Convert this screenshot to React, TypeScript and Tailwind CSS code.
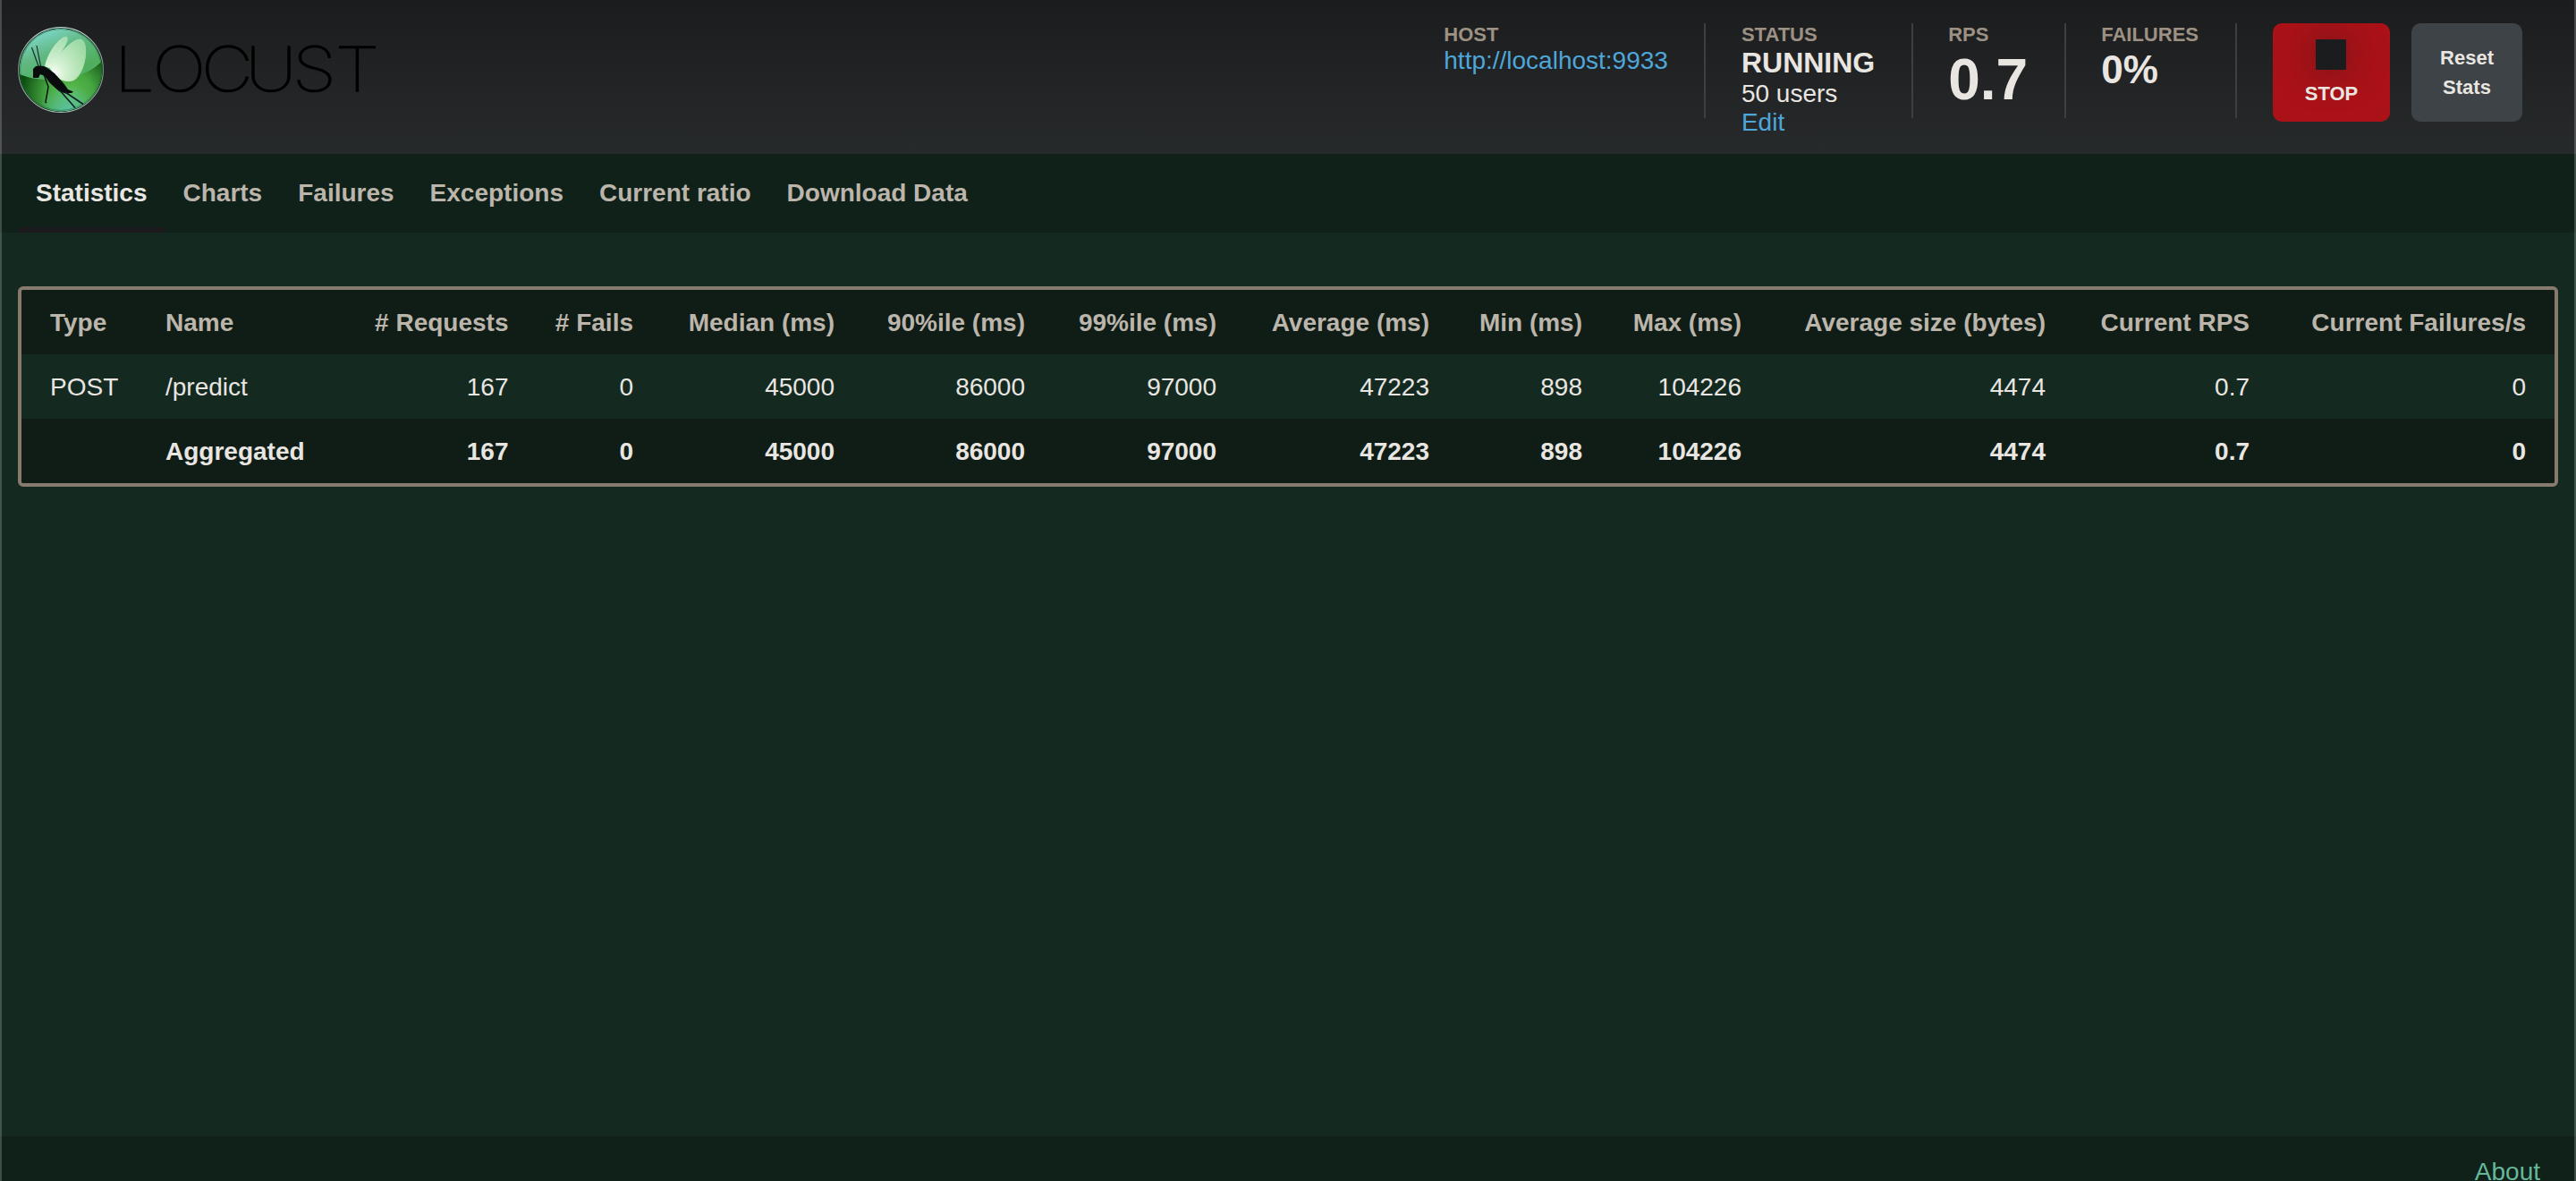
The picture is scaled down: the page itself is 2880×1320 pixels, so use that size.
const headers = [
  'Type', 'Name', '# Requests', '# Fails', 'Median (ms)', '90%ile (ms)', '99%ile (ms)',
  'Average (ms)', 'Min (ms)', 'Max (ms)', 'Average size (bytes)', 'Current RPS', 'Current Failures/s',
];
const widths = [129, 207, 240.5, 139.5, 225, 213, 214, 238, 171, 178, 340, 228, 309];
const values = ['167', '0', '45000', '86000', '97000', '47223', '898', '104226', '4474', '0.7', '0'];
const tabs = ['Statistics', 'Charts', 'Failures', 'Exceptions', 'Current ratio', 'Download Data'];

function LocustMark() {
  return (
    <svg width="120" height="120" viewBox="0 0 120 120" className="block">
      <defs>
        <linearGradient id="ball" x1="0.2" y1="0" x2="0.6" y2="1">
          <stop offset="0" stopColor="#83dcd8" />
          <stop offset="0.3" stopColor="#62b985" />
          <stop offset="0.6" stopColor="#4fae5c" />
          <stop offset="1" stopColor="#55b998" />
        </linearGradient>
        <radialGradient id="shade" gradientUnits="userSpaceOnUse" cx="68" cy="86" r="58">
          <stop offset="0" stopColor="#5fbf50" />
          <stop offset="0.45" stopColor="#45a53c" stopOpacity="0.9" />
          <stop offset="0.95" stopColor="#0a4a0e" />
        </radialGradient>
        <radialGradient id="teal" gradientUnits="userSpaceOnUse" cx="66" cy="108" r="34">
          <stop offset="0" stopColor="#5cc4ae" />
          <stop offset="1" stopColor="#5cc4ae" stopOpacity="0" />
        </radialGradient>
        <radialGradient id="glow" gradientUnits="userSpaceOnUse" cx="50" cy="62" r="46">
          <stop offset="0" stopColor="#fff" />
          <stop offset="0.25" stopColor="#e2f8de" stopOpacity="0.92" />
          <stop offset="1" stopColor="#b4e6b4" stopOpacity="0.72" />
        </radialGradient>
        <linearGradient id="rim" x1="0" y1="0" x2="0" y2="1">
          <stop offset="0" stopColor="#c4d6d3" />
          <stop offset="0.5" stopColor="#7d918b" />
          <stop offset="1" stopColor="#a9bdb6" />
        </linearGradient>
        <clipPath id="disc"><circle cx="58" cy="58" r="46.3" /></clipPath>
      </defs>
      <circle cx="58" cy="58" r="47.4" fill="#0b2a18" stroke="url(#rim)" strokeWidth="1.1" />
      <g clipPath="url(#disc)">
        <circle cx="58" cy="58" r="46.3" fill="url(#ball)" />
        <path d="M10 62 C34 74 84 72 106 46 L110 110 H8 Z" fill="url(#shade)" />
        <circle cx="66" cy="108" r="34" fill="url(#teal)" />
      </g>
      <circle cx="58" cy="58" r="45.4" fill="none" stroke="#17643a" strokeOpacity="0.5" strokeWidth="1" />
      <path d="M40 54 C42 44 50 28 60 22 C65 19 67 22 65 27 C61 37 52 46 45 56 Z" fill="url(#glow)" />
      <path d="M45 55 C54 43 66 28 76 24 C84 21 87 30 86 41 C85 55 78 71 68 71 C59 72 51 66 45 55 Z" fill="url(#glow)" />
      <path d="M27 57 L30 54 C34 53 39 53 43 56 L51 62 L61 73 L66 80 L72 82.500 L70 84 L66 84 L68 86 L56 82 L46 73 L40 65 L35 63 L33 67 L27 67 Z" fill="#0a0b0c" />
      <path d="M25.500 33 L33 54 M31 31 L35.500 54" stroke="#16302d" strokeWidth="1.2" fill="none" />
      <path d="M39 63 L44 77 L41 94 L42 95" stroke="#0b1110" strokeWidth="1.5" fill="none" />
      <path d="M56 80 L74 100.500 M63 83 L83 96.500" stroke="#0d1f2c" strokeWidth="1.6" fill="none" />
    </svg>
  );
}

function Logo() {
  return (
    <div className="flex pt-5">
      <LocustMark />
      <svg width="300" height="120" className="block overflow-visible" aria-label="LOCUST">
        <text
          x="-1.85 34.9 81.9 124.4 169.8 211.1"
          y="82.5"
          transform="scale(1.16 1)"
          className="fill-black stroke-black stroke-[1.4px] font-['Inter'] text-[69px] font-thin"
        >
          LOCUST
        </text>
      </svg>
    </div>
  );
}

function Label({ children }: { children: string }) {
  return <div className="text-[22px] font-bold leading-[26px] text-[#9c9183]">{children}</div>;
}

export default function App() {
  return (
    <div className="relative flex h-[1320px] w-full flex-col overflow-hidden bg-[#142a21] font-['Liberation_Sans',Arial,sans-serif] text-[28px] text-[#e9e6e2]">
      <header className="flex h-[172px] shrink-0 items-start justify-between bg-linear-to-b from-[#1b1c1e] to-[#272a2b] pl-2.5 pr-[60px]">
        <Logo />
        <div className="flex pt-[26px]">
          <div className="h-[106px] border-r-2 border-[#3c4042] pr-10">
            <Label>HOST</Label>
            <a className="block leading-8 text-[#4fa6d8]">http://localhost:9933</a>
          </div>
          <div className="h-[106px] border-r-2 border-[#3c4042] pl-10 pr-[41px]">
            <Label>STATUS</Label>
            <div className="text-[32px] font-bold leading-9">RUNNING</div>
            <div className="mt-px leading-8">50 users</div>
            <a className="block leading-8 text-[#4fa6d8]">Edit</a>
          </div>
          <div className="h-[106px] border-r-2 border-[#3c4042] pl-[39px] pr-[41px]">
            <Label>RPS</Label>
            <div className="mt-[5px] text-[64px] font-bold leading-[64px]">0.7</div>
          </div>
          <div className="h-[106px] border-r-2 border-[#3c4042] pl-[39px] pr-[41px]">
            <Label>FAILURES</Label>
            <div className="mt-0.5 text-[44px] font-bold leading-[48px]">0%</div>
          </div>
          <button className="ml-10 flex h-[110px] w-[131px] flex-col items-center overflow-hidden rounded-[10px] bg-[#ab1217] pt-[18px] text-[22px] font-bold">
            <span className="mr-px block size-[34px] shrink-0 bg-[#1b1c1e] shadow-[0_0_40px_rgba(27,28,30,0.5)]" />
            <span className="relative mt-[15px] block leading-6">STOP</span>
          </button>
          <button className="ml-6 flex h-[110px] w-[124px] flex-col items-center justify-center rounded-[10px] bg-[#3d4346] text-[22px] font-bold leading-[33px]">
            <span>Reset</span>
            <span>Stats</span>
          </button>
        </div>
      </header>

      <nav className="flex h-[88px] shrink-0 bg-[#0f2119] pl-5 font-bold leading-[88px] text-[#bcb5ab]">
        {tabs.map((t, i) => (
          <a key={t} className={i === 0 ? 'px-5 text-[#e9e6e2] shadow-[inset_0_-6px_0_#1b1b1d]' : 'px-5'}>{t}</a>
        ))}
      </nav>

      <main className="flex-1 px-5 pt-[60px]">
        <div className="overflow-hidden rounded-[6px] border-4 border-[#877b6d]">
          <table className="w-full table-fixed border-collapse whitespace-nowrap">
            <colgroup>
              {widths.map((w, i) => <col key={i} style={{ width: w }} />)}
            </colgroup>
            <thead>
              <tr className="h-[72px] bg-[#0f1d16] text-[#bcb5ab]">
                {headers.map((h, i) => (
                  <th key={h} className={i < 2 ? 'p-0 pl-8 pt-px text-left font-bold' : 'p-0 pr-8 pt-px text-right font-bold'}>{h}</th>
                ))}
              </tr>
            </thead>
            <tbody>
              <tr className="h-[72px]">
                <td className="p-0 pl-8 pt-px">POST</td>
                <td className="p-0 pl-8 pt-px">/predict</td>
                {values.map((v, i) => <td key={i} className="p-0 pr-8 pt-px text-right">{v}</td>)}
              </tr>
              <tr className="h-[72px] bg-[#0f1d16] font-bold">
                <td className="p-0 pl-8" />
                <td className="p-0 pl-8 pt-px">Aggregated</td>
                {values.map((v, i) => <td key={i} className="p-0 pr-8 pt-px text-right">{v}</td>)}
              </tr>
            </tbody>
          </table>
        </div>
      </main>

      <footer className="flex h-[50px] shrink-0 justify-end bg-[#0f2119] pr-10 pt-[24px] leading-8 text-[#66b79b]">
        <a>About</a>
      </footer>

      <div className="pointer-events-none absolute inset-0 border-x-2 border-white/20" />
    </div>
  );
}
